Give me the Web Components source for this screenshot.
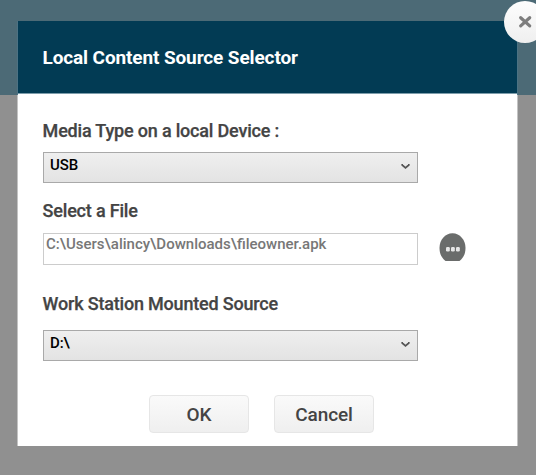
<!DOCTYPE html>
<html lang="en">
<head>
<meta charset="utf-8">
<title>Local Content Source Selector</title>
<style>
html, body { margin: 0; height: 100%; overflow: hidden; }
body { font-family: Roboto, "Liberation Sans", sans-serif; background: linear-gradient(#4c6a76 95px, #909090 95px); }
</style>
</head>
<body>
<source-dialog heading="Local Content Source Selector">
  <field-label>Media Type on a local Device :</field-label>
  <drop-select>USB</drop-select>
  <field-label style="--gap:17px">Select a File</field-label>
  <file-picker>C:\Users\alincy\Downloads\fileowner.apk</file-picker>
  <field-label style="--gap:28px;--space:16px">Work Station Mounted Source</field-label>
  <drop-select>D:\</drop-select>
  <push-button slot="actions">OK</push-button>
  <push-button slot="actions">Cancel</push-button>
</source-dialog>
<script>
function define(name, html) {
  const template = document.createElement('template');
  template.innerHTML = html;
  customElements.define(name, class extends HTMLElement {
    constructor() {
      super();
      this.attachShadow({ mode: 'open' }).append(template.content.cloneNode(true));
    }
    connectedCallback() {
      const heading = this.shadowRoot.querySelector('h1');
      if (heading) heading.textContent = this.getAttribute('heading');
    }
  });
}

define('close-badge', `
<style>
:host { display: block; width: 42px; height: 42px; border-radius: 50%; background: linear-gradient(#fdfdfd, #efefef); }
svg { display: block; }
</style>
<svg width="42" height="42" viewBox="0 0 42 42"><path d="M16.700 16.700l9 8.200M25.700 16.700l-9 8.200" fill="none" stroke="#7d7d7d" stroke-width="3.200" stroke-linecap="round"/></svg>`);

define('source-dialog', `
<style>
:host { display: block; box-sizing: border-box; position: relative; width: 501px; height: 425px; margin: 21px 0 0 17px; background: #fff; border: solid #c3c3c3; border-width: 0 1px; background-clip: padding-box; }
header { box-sizing: border-box; height: 73px; padding: 2px 24.500px 0; display: flex; align-items: center; background: #023b54; border-bottom: 1px solid #7d9dab; }
h1 { margin: 0; font-size: 19px; line-height: 24px; font-weight: 700; color: #fff; letter-spacing: -.120px; white-space: nowrap; }
main { padding: 26px 25px 0; }
footer { display: flex; gap: 25px; padding: 34px 0 0 131px; }
close-badge { position: absolute; top: -20px; left: 486px; }
.edge { position: absolute; top: 0; width: 1px; height: 74px; background: #4c7283; }
</style>
<header><h1></h1></header>
<main><slot></slot></main>
<footer><slot name="actions"></slot></footer>
<span class="edge" style="left:-1px"></span><span class="edge" style="right:-1px"></span>
<close-badge></close-badge>`);

define('field-label', `
<style>
:host { display: block; margin: var(--gap, 0) 0 var(--space, 11px) -.4px; font-size: 18px; line-height: 21px; font-weight: 500; color: #444; letter-spacing: -.190px; white-space: nowrap; -webkit-text-stroke: .25px #444; }
</style><slot></slot>`);

define('drop-select', `
<style>
:host { display: flex; box-sizing: border-box; width: 375px; height: 31px; padding: 3px 7px 0 6px; border: 1px solid #a9a9a9; background: linear-gradient(#efefef, #e3e3e3); justify-content: space-between; font-size: 15px; line-height: 18px; font-weight: 500; color: #000; letter-spacing: -.1px; }
svg { margin-top: 6px; }
</style>
<span><slot></slot></span>
<svg width="9" height="8" viewBox="0 0 9 8"><path d="M1.200 2v1L4.500 5.800 7.800 3v-1" fill="none" stroke="#555" stroke-width="1.700"/></svg>`);

define('file-picker', `
<style>
:host { display: flex; gap: 21px; align-items: flex-start; margin-top: 12px; }
.path { box-sizing: border-box; width: 375px; height: 32px; padding: 1px 2px; border: 1px solid #ccc; font-size: 15px; line-height: 18px; font-weight: 500; color: #777; white-space: nowrap; }
</style>
<div class="path"><slot></slot></div>
<svg width="28" height="29" viewBox="0 0 28 29"><path d="M6.500 28C2.500 25 .5 20.500 .5 15C.5 7 6 .2 13.500 .2S26.500 7 26.500 15C26.500 20.500 24.500 25 20.500 28Z" fill="#6a6c6b"/><g fill="#e6e6e6"><rect x="7" y="14" width="3.800" height="4.500" rx="1.200"/><rect x="12" y="14" width="3.800" height="4.500" rx="1.200"/><rect x="17" y="14" width="3.800" height="4.500" rx="1.200"/></g></svg>`);

define('push-button', `
<style>
:host { display: flex; box-sizing: border-box; width: 100px; height: 38px; padding-top: 1px; border: 1px solid #e6e6e6; border-radius: 4px; background: linear-gradient(#fafafa, #efefef); align-items: center; justify-content: center; font-size: 19px; line-height: 23px; font-weight: 500; color: #444; letter-spacing: -.150px; }
</style><slot></slot>`);
</script>
</body>
</html>
